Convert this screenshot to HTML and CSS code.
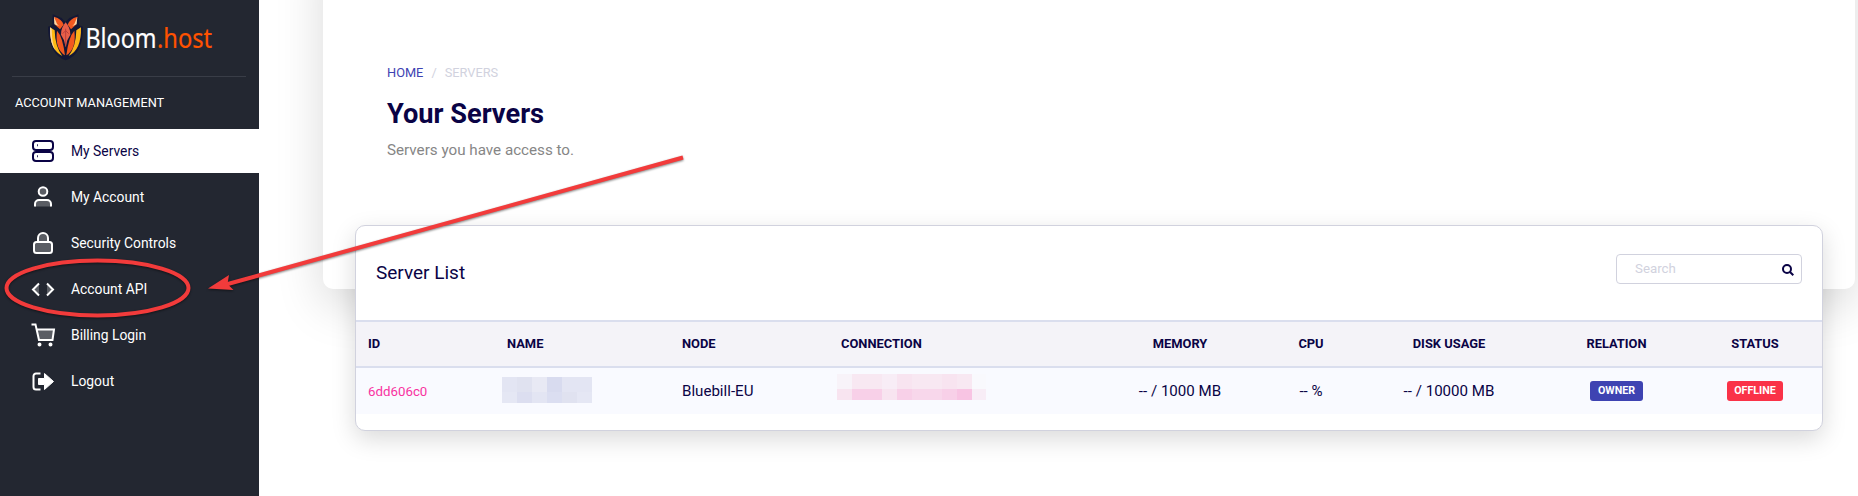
FILE: index.html
```html
<!DOCTYPE html>
<html lang="en">
<head>
<meta charset="utf-8">
<title>Your Servers</title>
<link rel="stylesheet" href="styles.css">
</head>
<body>
<div class="app">
  <aside class="sidebar">
    <div class="brand">
      <svg class="logo" viewBox="0 0 259 76" role="img" aria-label="Bloom.host">
        <g transform="scale(.3333)">
          <path class="ink" d="M144 80L157 76L158 43L185 54L196 66L208 54L235 43L237 76L249 80Q250 162 197 181Q145 162 144 80Z"/>
          <path class="gold" d="M150 82L164 91Q165 140 187 168Q148 149 150 82Z"/>
          <path class="amber" d="M243 82L229 91Q228 140 206 168Q245 149 243 82Z"/>
          <path class="cream" d="M150 82L155 86Q155 132 168 154Q149 132 150 82Z"/>
          <path class="flame" d="M162 50Q186 57 191 74L180 88L166 75Z"/>
          <path class="flame" d="M232 50Q208 57 203 74L213 88L227 75Z"/>
          <path class="cream" d="M162 50L171 72L177 78L163 73Z"/>
          <path class="cream" d="M232 50L223 72L217 78L230 73Z"/>
          <path class="flame" d="M171 92Q188 110 195 166Q164 147 171 92Z"/>
          <path class="flame" d="M223 92Q206 110 199 166Q230 147 223 92Z"/>
          <path class="coral" d="M197 67Q212 85 211 104L202 121L197 142L192 121L183 104Q182 85 197 67Z"/>
          <path class="seam" d="M197 86V139M188 101L197 92L206 101"/>
        </g>
        <text class="word" x="85.500" y="47.700" textLength="71" lengthAdjust="spacingAndGlyphs">Bloom</text>
        <text class="word host" x="157" y="47.700" textLength="55" lengthAdjust="spacingAndGlyphs">.host</text>
      </svg>
    </div>
    <h6 class="section">ACCOUNT MANAGEMENT</h6>
    <nav class="menu">
      <a class="item active"><svg class="icon" viewBox="0 0 24 24"><rect x="2" y="2" width="20" height="9" rx="3"/><rect x="2" y="13" width="20" height="9" rx="3"/><path d="M6 6.200h.8M6 17.200h.8"/></svg>My Servers</a>
      <a class="item"><svg class="icon" viewBox="0 0 24 24"><circle class="tint" cx="12" cy="6.500" r="4.300"/><path class="tint" d="M4 21.500V19a4 4 0 0 1 4-4h8a4 4 0 0 1 4 4v2.500"/></svg>My Account</a>
      <a class="item"><svg class="icon" viewBox="0 0 24 24"><rect class="tint" x="3" y="11" width="18" height="11" rx="2.500"/><path class="tint" d="M7 11V7a5 5 0 0 1 10 0v4"/></svg>Security Controls</a>
      <a class="item"><svg class="icon" viewBox="0 0 24 24"><path class="tint" d="M8 6.500L2 12.500L8 18.500"/><path class="tint" d="M16 6.500L22 12.500L16 18.500"/></svg>Account API</a>
      <a class="item"><svg class="icon" viewBox="0 0 24 24"><path class="tint none" d="M5.500 6.500H23L21.500 17H8Z"/><path d="M.5 1.500H4.500L8 17H21.500L23 6.500H5.500"/><circle class="solid" cx="8.500" cy="21.500" r="1"/><circle class="solid" cx="19.500" cy="21.500" r="1"/></svg>Billing Login</a>
      <a class="item"><svg class="icon" viewBox="0 0 24 24"><path d="M9.500 4.500H5A2.500 2.500 0 0 0 2.500 7V18A2.500 2.500 0 0 0 5 20.500H9.500"/><path class="solid thin" d="M7.500 9.500H13.500V4.500L22.500 12.500L13.500 20.500V15.500H7.500Z"/></svg>Logout</a>
    </nav>
  </aside>
  <main class="main">
    <header class="hero">
      <div class="crumbs"><a>HOME</a><span class="slash">/</span><span>SERVERS</span></div>
      <h1>Your Servers</h1>
      <p>Servers you have access to.</p>
    </header>
    <section class="card">
      <div class="card-head">
        <h2>Server List</h2>
        <label class="search"><input type="text" placeholder="Search"><svg class="lens" viewBox="0 0 12 12"><circle cx="5" cy="5" r="4"/><path d="M8 8l3.300 3.300"/></svg></label>
      </div>
      <table>
        <colgroup><col class="c-id"><col class="c-name"><col class="c-node"><col class="c-conn"><col class="c-mem"><col class="c-cpu"><col class="c-disk"><col class="c-rel"><col class="c-stat"></colgroup>
        <thead><tr><th>ID</th><th>NAME</th><th>NODE</th><th>CONNECTION</th><th class="mid">MEMORY</th><th class="mid">CPU</th><th class="mid">DISK USAGE</th><th class="mid">RELATION</th><th class="mid">STATUS</th></tr></thead>
        <tbody><tr>
          <td class="id">6dd606c0</td>
          <td><svg class="mosaic mosaic-name" viewBox="0 0 90 26"><path fill="#e3e5f3" d="M0 0h90v26H0z"/><path fill="#e8e9f4" d="M30 0h15v15H30z"/><path fill="#d8dbef" d="M45 0h15v15H45z"/><path fill="#dcdef0" d="M15 15h15v11H15z"/><path fill="#dbdef1" d="M45 15h15v11H45z"/><path fill="#e0e2f0" d="M60 15h15v11H60zM15 0h15v15H15z"/><path fill="#e5e7f4" d="M75 15h15v11H75zM0 15h15v11H0z"/></svg></td>
          <td>Bluebill-EU</td>
          <td><svg class="mosaic mosaic-conn" viewBox="0 0 149 26"><path fill="#f8e8f2" d="M0 0h135v26H0z"/><path fill="#f8f3f9" d="M0 0h15v15H0z"/><path fill="#f8edf6" d="M45 0h15v15H45zM135 15h14v11H135z"/><path fill="#f8e4f0" d="M60 0h15v15H60zM105 0h15v15H105zM0 15h15v11H0zM45 15h15v11H45z"/><path fill="#f9f9fd" d="M135 0h14v15H135z"/><path fill="#f8d0e8" d="M15 15h30v11H15zM60 15h15v11H60zM105 15h15v11H105z"/><path fill="#f8d7eb" d="M75 15h30v11H75z"/><path fill="#f8c4e3" d="M120 15h15v11H120z"/></svg></td>
          <td class="mid">-- / 1000 MB</td><td class="mid">-- %</td><td class="mid">-- / 10000 MB</td>
          <td class="mid"><span class="badge">OWNER</span></td>
          <td class="mid"><span class="badge off">OFFLINE</span></td>
        </tr></tbody>
      </table>
    </section>
  </main>
</div>
<svg class="markup" viewBox="0 0 1858 496">
  <ellipse cx="97.500" cy="288" rx="91" ry="27.500"/>
  <path d="M683 157.500L226 284.500"/>
  <path class="head" d="M208 288.500L229 275L227.500 284L233.500 290Z"/>
</svg>
</body>
</html>
```
FILE: styles.css
```css
* { box-sizing: border-box; }
body { margin: 0; font-family: Roboto, sans-serif; color: #0a0345; background: #fff; overflow: hidden; }
h1, h2, h6, p { margin: 0; }
.app { display: flex; width: 1858px; height: 496px; overflow: hidden; }
.sidebar { width: 259px; flex: none; background: #232731; color: #fff; position: relative; z-index: 1; }
.brand { height: 77px; margin: 0 13px 0 12px; border-bottom: 1px solid #393d47; }
.logo { display: block; width: 259px; height: 76px; margin-left: -12px; }
.ink { fill: #131735; }
.gold { fill: #fdb913; }
.amber { fill: #fbb51a; }
.cream { fill: #fbd8a5; }
.flame { fill: #f2581f; }
.coral { fill: #e96049; }
.seam { fill: none; stroke: #b9403d; stroke-width: 3; }
.word { font: 27px "Noto Sans", sans-serif; fill: #fff; stroke: #fff; stroke-width: .2; }
.host { fill: #ff5200; stroke: #ff5200; }
.section { height: 52px; padding: 16px 15px 0; font-size: 12.75px; line-height: 20px; font-weight: 400; }
.menu { display: flex; flex-direction: column; gap: 2px; }
.item { display: flex; align-items: center; height: 44px; padding-left: 31px; gap: 16px; font-size: 13.85px; line-height: 20px; color: #fff; }
.item.active { background: #fff; color: #0a0345; }
.icon { width: 24px; height: 24px; fill: none; stroke: currentColor; stroke-width: 2; overflow: visible; }
.tint { fill: rgba(255, 255, 255, .25); }
.none { stroke: none; }
.solid { fill: currentColor; }
.thin { stroke-width: 1; }
.main { flex: 1; padding-left: 64px; }
.hero { width: 1532px; height: 349px; margin-top: -60px; padding: 123px 64px 0; border-radius: 0 0 10px 10px; background: #fff; box-shadow: 0 16px 48px rgba(0, 0, 0, .15); }
.crumbs { display: flex; font-size: 12.8px; line-height: 20px; color: #d1d2de; }
.crumbs a { color: #3e43b2; }
.slash { margin: 0 8px; }
.hero h1 { margin-top: 14px; font-size: 27.2px; line-height: 34px; font-weight: 700; }
.hero p { margin-top: 9px; font-size: 15.2px; line-height: 20px; color: #868686; }
.card { position: relative; width: 1468px; height: 206px; margin: -64px 0 0 32px; border: 1px solid #d1d2de; border-radius: 10px; background: #fff; box-shadow: 0 8px 24px rgba(0, 0, 0, .15); }
.card-head { display: flex; justify-content: space-between; height: 94px; padding: 28px 20px 0; }
.card h2 { margin-top: 7px; font-size: 19px; line-height: 24px; font-weight: 400; }
.search { display: flex; align-items: center; width: 186px; height: 30px; padding: 0 7px 0 18px; border: 1px solid #d1d2de; border-radius: 4px; }
.search input { width: 147px; padding: 0 0 1px; border: 0; outline: 0; font: 13.3px Roboto, sans-serif; background: none; }
.search input::placeholder { color: #d1d2de; }
.lens { width: 12px; height: 12px; margin-top: 2px; fill: none; stroke: #0a0345; stroke-width: 2; overflow: visible; }
table { width: 1466px; table-layout: fixed; border-collapse: separate; border-spacing: 0; }
.c-id { width: 139px; } .c-name { width: 175px; } .c-node { width: 159px; } .c-conn { width: 262px; }
.c-mem { width: 178px; } .c-cpu { width: 84px; } .c-disk { width: 192px; } .c-rel { width: 143px; } .c-stat { width: 134px; }
th { height: 48px; padding: 0 12px 2px; border: solid #dadeee; border-width: 2px 0; background: #f4f3f8; font-size: 12.9px; text-align: left; }
td { height: 46px; padding: 0 12px; background: #f9faff; font-size: 15.1px; }
th.mid, td.mid { text-align: center; }
td.id { font-size: 13.3px; color: #f8339f; }
.mosaic { display: block; height: 26px; }
.mosaic-name { width: 90px; margin: -2px 0 0 -5px; }
.mosaic-conn { width: 149px; margin: -8px 0 0 -4px; }
.badge { display: inline-block; height: 20px; padding: 0 7.500px; border-radius: 3px; background: #3e43b2; color: #fff; font-size: 10.7px; line-height: 20px; font-weight: 700; vertical-align: middle; }
.badge.off { background: #fa3248; }
.markup { position: absolute; inset: 0; z-index: 2; width: 1858px; height: 496px; fill: none; stroke: #f23b3b; stroke-width: 4; pointer-events: none; filter: drop-shadow(0 1px 1px rgba(0, 0, 0, .5)); }
.head { fill: #f23b3b; stroke: none; }
```
